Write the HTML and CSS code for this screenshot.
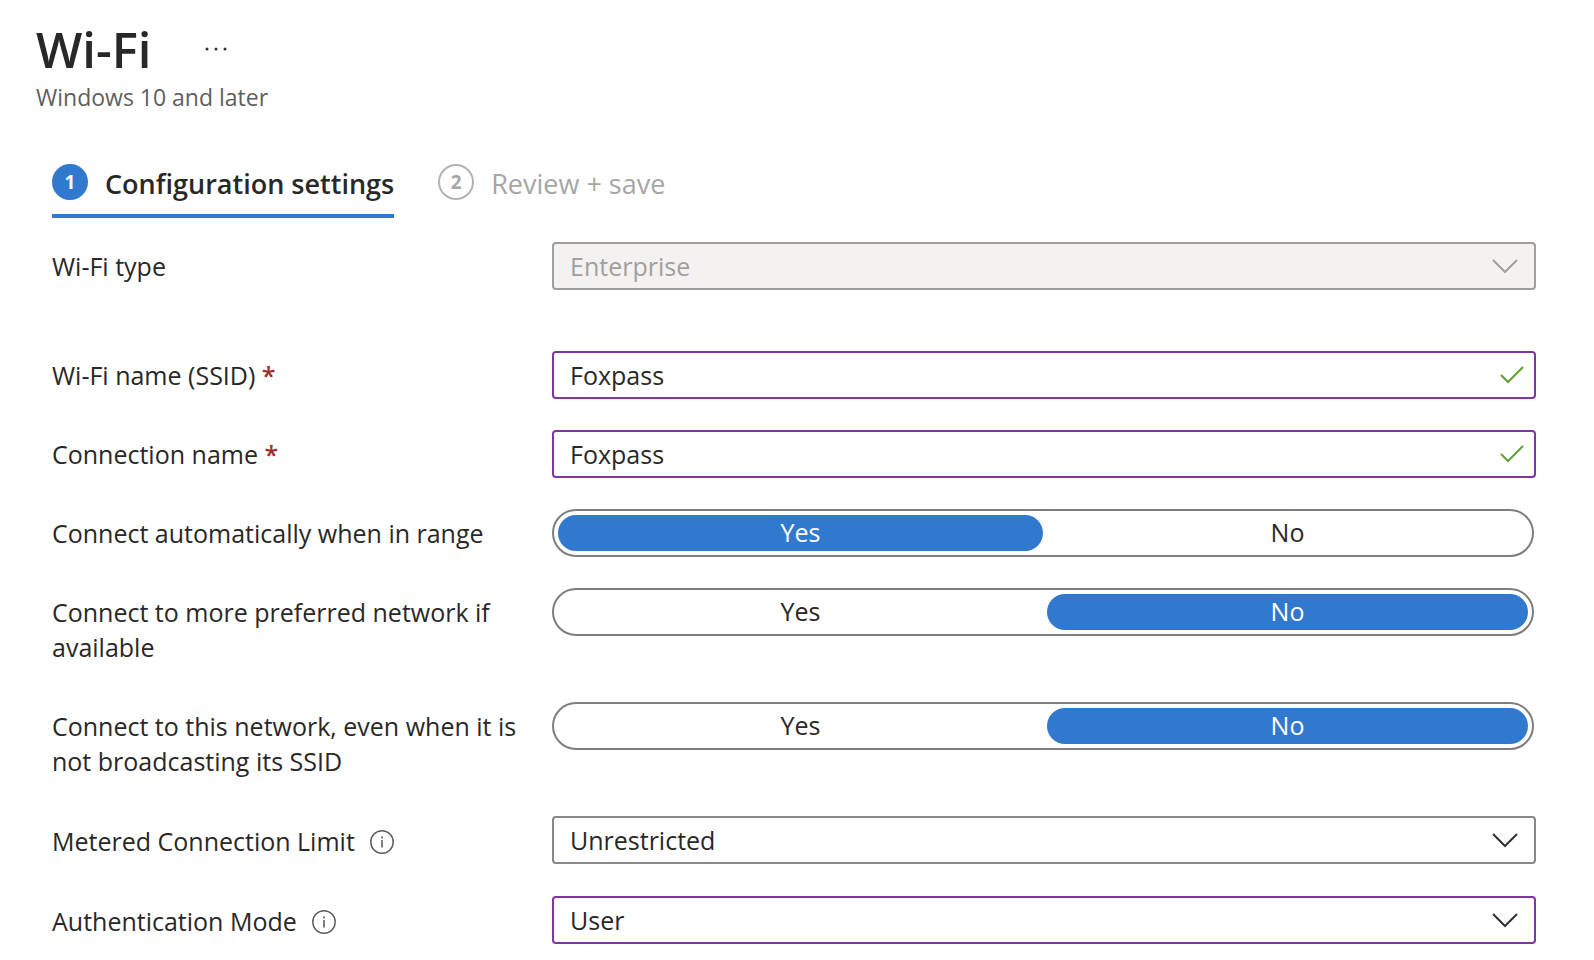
FILE: index.html
```html
<!DOCTYPE html>
<html lang="en">
<head>
<meta charset="utf-8">
<meta name="viewport" content="width=device-width, initial-scale=1">
<title>Wi-Fi</title>
<link rel="stylesheet" href="styles.css">
</head>
<body>
<header class="page-header">
  <div class="title-row">
    <h1 class="title">Wi-Fi</h1>
    <button class="more" type="button" aria-label="More actions">
      <svg width="24" height="6" viewBox="0 0 24 6" fill="#323130" aria-hidden="true"><circle cx="3" cy="3" r="1.5"/><circle cx="12" cy="3" r="1.5"/><circle cx="21" cy="3" r="1.5"/></svg>
    </button>
  </div>
  <p class="subtitle">Windows 10 and later</p>
</header>

<nav class="steps" aria-label="Steps">
  <button class="step step-current" type="button" aria-current="step"><span class="step-number">1</span><span class="step-name">Configuration settings</span></button>
  <button class="step" type="button"><span class="step-number">2</span><span class="step-name">Review + save</span></button>
</nav>

<form class="settings">
  <div class="row row-spaced">
    <label class="name" for="wifi-type">Wi-Fi type</label>
    <div class="field">
      <select class="control" id="wifi-type" disabled><option>Enterprise</option></select>
      <svg class="chevron chevron-disabled" viewBox="0 0 28 16" aria-hidden="true"><path d="M2 2l12 12L26 2"/></svg>
    </div>
  </div>
  <div class="row">
    <label class="name" for="ssid">Wi-Fi name (SSID) <span class="required">*</span></label>
    <div class="field">
      <input class="control edited" id="ssid" type="text" value="Foxpass" required>
      <svg class="tick" viewBox="0 0 26 18" aria-hidden="true"><path d="M2 9l7 7L24 1"/></svg>
    </div>
  </div>
  <div class="row">
    <label class="name" for="connection">Connection name <span class="required">*</span></label>
    <div class="field">
      <input class="control edited" id="connection" type="text" value="Foxpass" required>
      <svg class="tick" viewBox="0 0 26 18" aria-hidden="true"><path d="M2 9l7 7L24 1"/></svg>
    </div>
  </div>
  <div class="row">
    <span class="name" id="auto-name">Connect automatically when in range</span>
    <div class="toggle" role="radiogroup" aria-labelledby="auto-name">
      <label class="choice"><input type="radio" name="auto" checked><span class="pill">Yes</span></label>
      <label class="choice"><input type="radio" name="auto"><span class="pill">No</span></label>
    </div>
  </div>
  <div class="row">
    <span class="name" id="preferred-name">Connect to more preferred network if available</span>
    <div class="toggle" role="radiogroup" aria-labelledby="preferred-name">
      <label class="choice"><input type="radio" name="preferred"><span class="pill">Yes</span></label>
      <label class="choice"><input type="radio" name="preferred" checked><span class="pill">No</span></label>
    </div>
  </div>
  <div class="row">
    <span class="name" id="hidden-name">Connect to this network, even when it is not broadcasting its SSID</span>
    <div class="toggle" role="radiogroup" aria-labelledby="hidden-name">
      <label class="choice"><input type="radio" name="hidden"><span class="pill">Yes</span></label>
      <label class="choice"><input type="radio" name="hidden" checked><span class="pill">No</span></label>
    </div>
  </div>
  <div class="row">
    <div class="name name-info">
      <label for="metered">Metered Connection Limit</label>
      <svg class="info" viewBox="0 0 24 24" aria-hidden="true"><circle class="info-ring" cx="12" cy="12" r="11.2"/><path d="M11.2 10h1.6v7.5h-1.6zM11.1 6.5h1.8v1.8h-1.8z"/></svg>
    </div>
    <div class="field">
      <select class="control" id="metered"><option>Unrestricted</option></select>
      <svg class="chevron" viewBox="0 0 28 16" aria-hidden="true"><path d="M2 2l12 12L26 2"/></svg>
    </div>
  </div>
  <div class="row">
    <div class="name name-info">
      <label for="auth">Authentication Mode</label>
      <svg class="info" viewBox="0 0 24 24" aria-hidden="true"><circle class="info-ring" cx="12" cy="12" r="11.2"/><path d="M11.2 10h1.6v7.5h-1.6zM11.1 6.5h1.8v1.8h-1.8z"/></svg>
    </div>
    <div class="field">
      <select class="control edited" id="auth"><option>User</option></select>
      <svg class="chevron" viewBox="0 0 28 16" aria-hidden="true"><path d="M2 2l12 12L26 2"/></svg>
    </div>
  </div>
</form>
</body>
</html>
```
FILE: styles.css
```css
* {
  box-sizing: border-box;
}

body {
  margin: 0;
  padding: 19px 58px 15px 36px;
  background: #fff;
  color: #292827;
  font-family: "Segoe UI", "Open Sans", "Noto Sans", sans-serif;
  font-size: 25px;
  line-height: 35px;
}

button,
input,
select {
  font: inherit;
  color: inherit;
}

button {
  padding: 0;
  border: 0;
  background: none;
}

.title-row {
  display: flex;
  align-items: center;
  gap: 52px;
}

.title {
  margin: 0;
  font-size: 49px;
  line-height: 60px;
  font-weight: 600;
}

.more {
  display: flex;
}

.subtitle {
  margin: 0;
  padding-top: 1px;
  font-size: 23px;
  color: #605e5c;
}

.steps {
  display: flex;
  gap: 44px;
  margin-top: 45px;
  padding-left: 16px;
}

.step {
  display: flex;
  gap: 17px;
  height: 58px;
  border-bottom: 4px solid transparent;
  color: #a6a6a6;
  font-size: 27px;
}

.step-current {
  border-color: #3179cf;
  color: #292827;
  font-weight: 600;
}

.step-name {
  padding-top: 6px;
}

.step-number {
  width: 36px;
  height: 36px;
  margin-top: 4px;
  border: 2px solid #b3b3b3;
  border-radius: 50%;
  font-size: 19px;
  line-height: 32px;
  font-weight: 700;
  text-align: center;
}

.step-current .step-number {
  border-color: #3179cf;
  background: #3179cf;
  color: #fff;
}

.settings {
  display: flex;
  flex-direction: column;
  gap: 31px;
  padding: 24px 0 0 16px;
}

.row {
  display: grid;
  grid-template-columns: 500px 1fr;
  align-items: start;
}

.row-spaced {
  margin-bottom: 30px;
}

.name {
  padding: 7px 24px 6px 0;
}

.name-info {
  display: flex;
  align-items: center;
  gap: 15px;
  padding-top: 8px;
}

.required {
  color: #9b2c2c;
  font-weight: 600;
}

.info {
  width: 24px;
  height: 24px;
  fill: #605e5c;
}

.info-ring {
  fill: none;
  stroke: #605e5c;
  stroke-width: 1.5;
}

.field {
  position: relative;
}

.control {
  display: block;
  width: 100%;
  height: 48px;
  padding: 0 60px 0 16px;
  border: 2px solid #8a8886;
  border-radius: 4px;
  background: #fff;
  appearance: none;
}

.control:disabled {
  border-color: #a19f9d;
  background: #f3f2f1;
  color: #a19f9d;
  opacity: 1;
}

.control.edited {
  border-color: #8035a0;
}

.chevron,
.tick {
  position: absolute;
  fill: none;
  stroke-width: 2;
  pointer-events: none;
}

.chevron {
  top: 16px;
  right: 17px;
  width: 28px;
  height: 16px;
  stroke: #323130;
}

.chevron-disabled {
  stroke: #a19f9d;
}

.tick {
  top: 15px;
  right: 11px;
  width: 26px;
  height: 18px;
  stroke: #62a030;
}

.toggle {
  display: grid;
  grid-template-columns: 485fr 481fr;
  gap: 4px;
  height: 48px;
  margin-right: 2px;
  padding: 4px;
  border: 2px solid #807e7d;
  border-radius: 24px;
}

.choice {
  position: relative;
}

.choice input {
  position: absolute;
  inset: 0;
  width: 100%;
  height: 100%;
  margin: 0;
  opacity: 0;
}

.pill {
  display: block;
  height: 36px;
  border-radius: 18px;
  line-height: 35px;
  text-align: center;
}

.choice input:checked + .pill {
  background: #3179cf;
  color: #fff;
}
```
